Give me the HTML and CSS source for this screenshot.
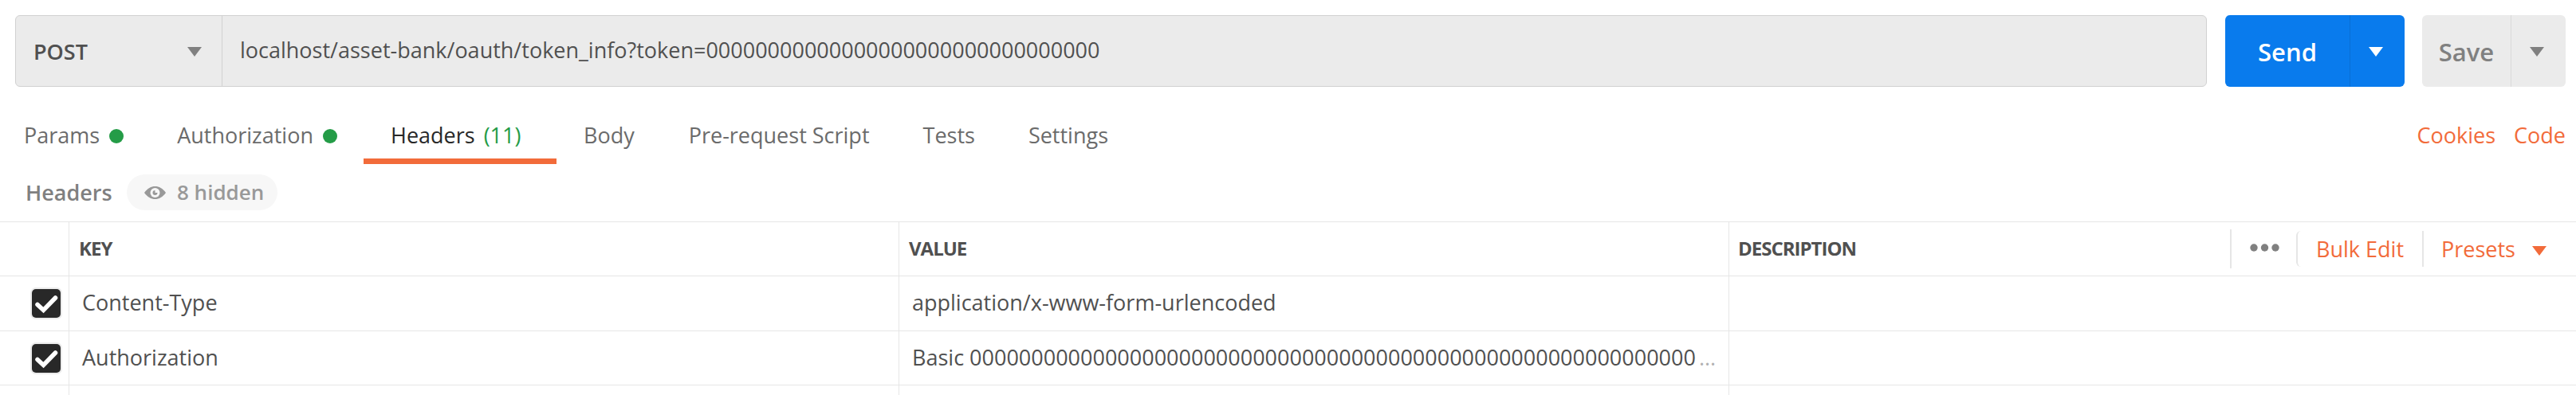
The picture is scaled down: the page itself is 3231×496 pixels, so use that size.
FILE: index.html
```html
<!DOCTYPE html>
<html lang="en">
<head>
  <meta charset="UTF-8">
  <title>POST token_info</title>
  <link rel="stylesheet" href="styles.css">
</head>
<body>
  <div class="request-bar">
    <div class="url-box">
      <div class="method">
        <span>POST</span>
        <svg class="caret" viewBox="0 0 18 12"><path d="M0 0h18L9 12z"/></svg>
      </div>
      <div class="url">localhost/asset-bank/oauth/token_info?token=00000000000000000000000000000000</div>
    </div>
    <div class="btn send">
      <span class="btn-label">Send</span>
      <span class="btn-drop"><svg class="caret" viewBox="0 0 18 12"><path d="M0 0h18L9 12z"/></svg></span>
    </div>
    <div class="btn save">
      <span class="btn-label">Save</span>
      <span class="btn-drop"><svg class="caret" viewBox="0 0 18 12"><path d="M0 0h18L9 12z"/></svg></span>
    </div>
  </div>

  <div class="tabs">
    <div class="tab">Params<i class="dot"></i></div>
    <div class="tab">Authorization<i class="dot"></i></div>
    <div class="tab active">Headers<span class="count">(11)</span></div>
    <div class="tab">Body</div>
    <div class="tab">Pre-request Script</div>
    <div class="tab">Tests</div>
    <div class="tab">Settings</div>
    <div class="links">
      <a>Cookies</a>
      <a>Code</a>
    </div>
  </div>

  <div class="section">
    <span class="section-title">Headers</span>
    <div class="pill">
      <svg class="eye" viewBox="0 0 27 16">
        <path fill="#999" d="M0 8C4 2.5 8.500 0 13.500 0S23 2.500 27 8c-4 5.500-8.500 8-13.500 8S4 13.500 0 8z"/>
        <circle cx="13.500" cy="8" r="6" fill="#f7f7f7"/>
        <path fill="#999" d="M13.500 5a3 3 0 1 0 3 3h-3z"/>
      </svg>
      <span>8 hidden</span>
    </div>
  </div>

  <div class="table">
    <div class="row head">
      <div class="cell check"></div>
      <div class="cell">KEY</div>
      <div class="cell">VALUE</div>
      <div class="cell desc">
        <span>DESCRIPTION</span>
        <div class="actions">
          <div class="more">
            <svg viewBox="0 0 37 10"><circle cx="5" cy="5" r="4.700"/><circle cx="18.500" cy="5" r="4.700"/><circle cx="32" cy="5" r="4.700"/></svg>
          </div>
          <div class="bulk">Bulk Edit</div>
          <div class="presets">Presets<svg class="caret" viewBox="0 0 18 12"><path d="M0 0h18L9 12z"/></svg></div>
        </div>
      </div>
    </div>
    <div class="row">
      <div class="cell check"><span class="checkbox"><svg viewBox="0 0 36 36"><path d="M7 19.500l7.500 7L29.500 11"/></svg></span></div>
      <div class="cell">Content-Type</div>
      <div class="cell">application/x-www-form-urlencoded</div>
      <div class="cell"></div>
    </div>
    <div class="row auth">
      <div class="cell check"><span class="checkbox"><svg viewBox="0 0 36 36"><path d="M7 19.500l7.500 7L29.500 11"/></svg></span></div>
      <div class="cell">Authorization</div>
      <div class="cell">Basic 00000000000000000000000000000000000000000000000000000000000<span class="more-text">...</span></div>
      <div class="cell"></div>
    </div>
    <div class="row last">
      <div class="cell check"></div>
      <div class="cell"></div>
      <div class="cell"></div>
      <div class="cell"></div>
    </div>
  </div>
</body>
</html>
```
FILE: styles.css
```css
* {
  box-sizing: border-box;
}

body {
  margin: 0;
  background: #fff;
  color: #505050;
  font-family: "Open Sans", sans-serif;
  font-size: 27px;
  white-space: nowrap;
}

svg {
  display: block;
}

.caret {
  width: 18px;
  height: 12px;
  fill: #808080;
}

/* Request bar */
.request-bar {
  display: flex;
  padding: 19px 13px 0 19px;
}

.url-box {
  display: flex;
  width: 2749px;
  height: 90px;
  margin-right: 23px;
  background: #ebebeb;
  border: 1px solid #d1d1d1;
  border-radius: 6px;
}

.method {
  display: flex;
  align-items: center;
  justify-content: space-between;
  width: 259px;
  padding: 1px 25px 0 22px;
  border-right: 1px solid #d1d1d1;
  font-weight: 600;
}

.url {
  display: flex;
  align-items: center;
  padding: 0 0 3px 22px;
}

.btn {
  display: flex;
  height: 90px;
  border-radius: 6px;
  font-size: 31px;
  font-weight: 600;
}

.btn-label {
  display: flex;
  align-items: center;
  justify-content: center;
  flex: 1;
  padding-top: 1px;
}

.btn-drop {
  display: flex;
  align-items: center;
  justify-content: center;
  width: 69px;
  padding: 1px 4px 0 0;
  border-left: 1px solid #d9d9d9;
}

.send {
  width: 225px;
  margin-right: 22px;
  background: #097bed;
  color: #fff;
}

.send .btn-drop {
  border-left-color: #0a6fd4;
}

.send .caret {
  fill: #fff;
}

.save {
  width: 180px;
  background: #ebebeb;
  color: #808080;
}

/* Tabs */
.tabs {
  display: flex;
  height: 97px;
  padding: 0 13px 0 0;
  color: #6b6b6b;
}

.tab {
  display: flex;
  align-items: center;
  margin-right: 3px;
  padding: 31px 32px 0;
  border-bottom: 7px solid transparent;
}

.tab:first-child {
  padding-left: 30px;
}

.tab.active {
  width: 242px;
  padding-left: 34px;
  margin: 0 2px 0 -2px;
  color: #282828;
  border-bottom-color: #f26b3a;
}

.tab:nth-child(4) {
  margin-right: 4px;
}

.dot {
  width: 18px;
  height: 18px;
  margin: 2px 0 0 12px;
  border-radius: 50%;
  background: #249c47;
}

.count {
  margin-left: 11px;
  color: #249c47;
}

.links {
  display: flex;
  align-items: center;
  gap: 23px;
  margin-left: auto;
  padding-top: 24px;
  color: #f26b3a;
}

/* Section title */
.section {
  display: flex;
  align-items: center;
  height: 72px;
  padding: 0 0 1px 32px;
  font-weight: 600;
  color: #808080;
}

.section-title {
  width: 127px;
}

.pill {
  display: flex;
  align-items: center;
  width: 189px;
  height: 45px;
  padding-left: 22px;
  border-radius: 23px;
  background: #f7f7f7;
  color: #999;
  font-size: 26px;
}

.pill span {
  padding-bottom: 1px;
}

.eye {
  width: 27px;
  height: 16px;
  margin-right: 14px;
}

/* Table */
.table {
  border-top: 1px solid #e6e6e6;
}

.row {
  display: grid;
  grid-template-columns: 87px 1041px 1041px 1fr;
  height: 69px;
  border-bottom: 1px solid #e6e6e6;
}

.row.head {
  height: 68px;
  font-size: 24px;
  font-weight: 700;
  letter-spacing: -1px;
}

.row.auth {
  height: 68px;
}

.row.last {
  height: 12px;
  border-bottom: none;
}

.cell {
  display: flex;
  align-items: center;
  padding: 0 0 3px 16px;
  border-right: 1px solid #e6e6e6;
}

.cell:last-child {
  border-right: none;
}

.head .cell {
  padding: 0 0 2px 12px;
}

.cell.check {
  padding: 0 0 0 40px;
}

.checkbox {
  width: 36px;
  height: 36px;
  border-radius: 5px;
  background: #282828;
  box-shadow: 0 0 0 2px #ebebeb;
}

.checkbox path {
  fill: none;
  stroke: #fff;
  stroke-width: 5.5;
  stroke-linecap: round;
}

.more-text {
  margin-left: 4px;
  color: #b0b0b0;
}

.head .desc {
  justify-content: space-between;
  padding: 0 37px 0 11px;
}

.desc > span {
  padding-bottom: 2px;
}

.actions {
  display: flex;
  align-items: center;
  color: #f26b3a;
  font-size: 27px;
  font-weight: 400;
  letter-spacing: 0;
}

.more {
  display: flex;
  align-items: center;
  width: 83px;
  height: 49px;
  padding: 0 0 3px 23px;
  border-left: 2px solid #e6e6e6;
}

.more svg {
  width: 37px;
  height: 10px;
  fill: #808080;
}

.bulk,
.presets {
  display: flex;
  align-items: center;
  height: 45px;
  border-left: 2px solid #e6e6e6;
}

.bulk {
  width: 158px;
  padding-left: 23px;
  border-radius: 6px 0 0 6px;
}

.presets {
  padding-left: 22px;
}

.presets .caret {
  margin: 5px 0 0 21px;
  fill: #f26b3a;
}
```
